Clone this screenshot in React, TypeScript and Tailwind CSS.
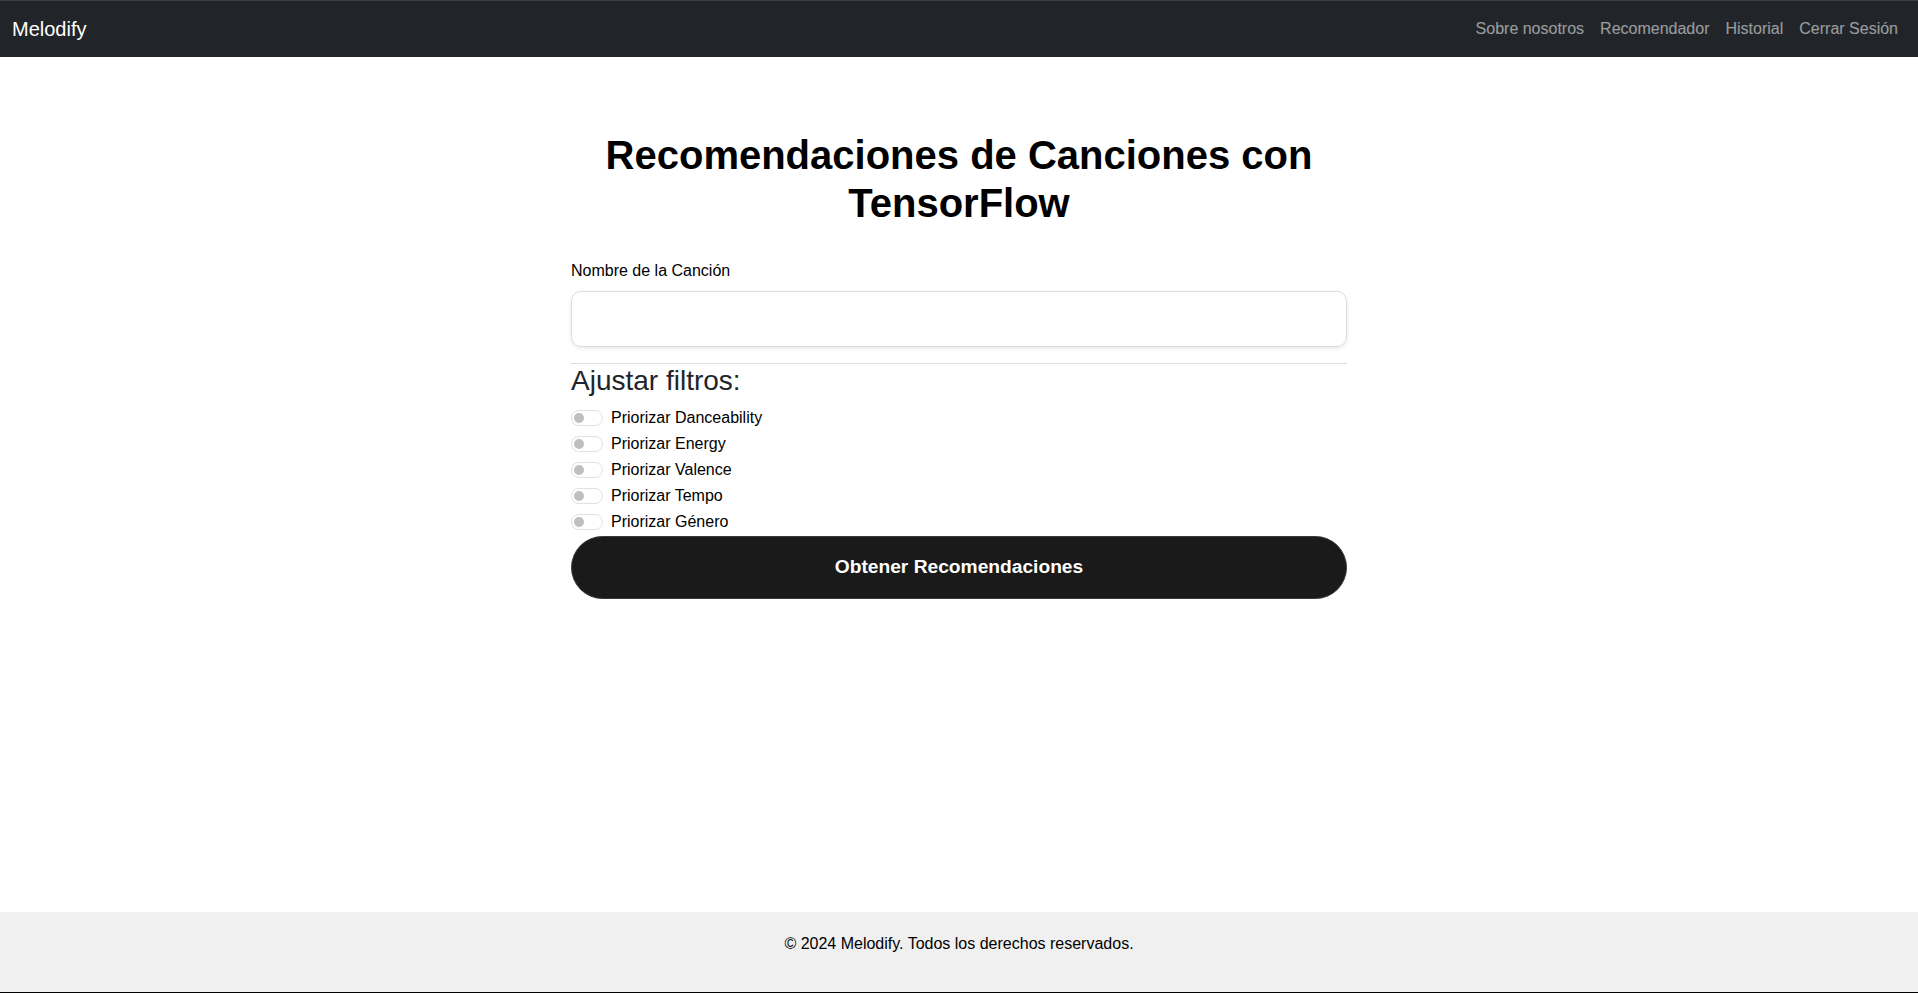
import { useState } from "react";

const filtros = [
  "Priorizar Danceability",
  "Priorizar Energy",
  "Priorizar Valence",
  "Priorizar Tempo",
  "Priorizar Género",
];

export default function App() {
  const [cancion, setCancion] = useState("");
  const [activos, setActivos] = useState<boolean[]>(filtros.map(() => false));

  const toggle = (i: number) => {
    setActivos((prev) => prev.map((v, j) => (j === i ? !v : v)));
  };

  return (
    <div className="flex min-h-screen flex-col bg-white font-['Liberation_Sans',Arial,sans-serif] text-black">
      <nav className="flex h-[57px] items-center justify-between border-t border-[#3b3e42] bg-[#212529] px-3">
        <a href="#" className="text-[20px] leading-[30px] text-white">
          Melodify
        </a>
        <ul className="flex items-center text-[16px] leading-6 text-white/55">
          <li className="px-2">Sobre nosotros</li>
          <li className="px-2">Recomendador</li>
          <li className="px-2">Historial</li>
          <li className="px-2">Cerrar Sesión</li>
        </ul>
      </nav>

      <main className="flex-1">
        <div className="mx-auto mt-[74px] w-[776px]">
          <h1 className="mb-8 text-center text-[40px] font-bold leading-[48px]">
            Recomendaciones de Canciones con TensorFlow
          </h1>

          <label className="mb-2 block text-[16px] leading-6">Nombre de la Canción</label>
          <input
            type="text"
            value={cancion}
            onChange={(e) => setCancion(e.target.value)}
            className="block h-[56px] w-full rounded-[10px] border border-[#dcdcdc] px-4 shadow-[0_2px_4px_rgba(0,0,0,0.08)] outline-none"
          />

          <hr className="mt-4 border-t border-[#dddddd]" />
          <h3 className="mb-2 text-[28px] leading-[34px] text-[#212529]">Ajustar filtros:</h3>

          {filtros.map((f, i) => (
            <div key={f} className="mb-[2px] flex h-6 items-center">
              <button
                type="button"
                onClick={() => toggle(i)}
                className={
                  "flex h-4 w-8 items-center rounded-full border px-[2px] " +
                  (activos[i]
                    ? "justify-end border-[#0d6efd] bg-[#0d6efd]"
                    : "justify-start border-[#dee2e6] bg-white")
                }
              >
                <span
                  className={
                    "h-[10px] w-[10px] rounded-full " + (activos[i] ? "bg-white" : "bg-[#bfbfbf]")
                  }
                />
              </button>
              <span className="ml-2 text-[16px] leading-6">{f}</span>
            </div>
          ))}

          <button
            type="button"
            className="h-[63px] w-full rounded-full border border-[#3a3a3a] bg-[#1a1a1a] text-[19.2px] font-bold text-white"
          >
            Obtener Recomendaciones
          </button>
        </div>
      </main>

      <footer className="border-b border-black bg-[#f0f0f0] pt-5 pb-5 text-center">
        <p className="mb-4 text-[16px] leading-6">© 2024 Melodify. Todos los derechos reservados.</p>
      </footer>
    </div>
  );
}
